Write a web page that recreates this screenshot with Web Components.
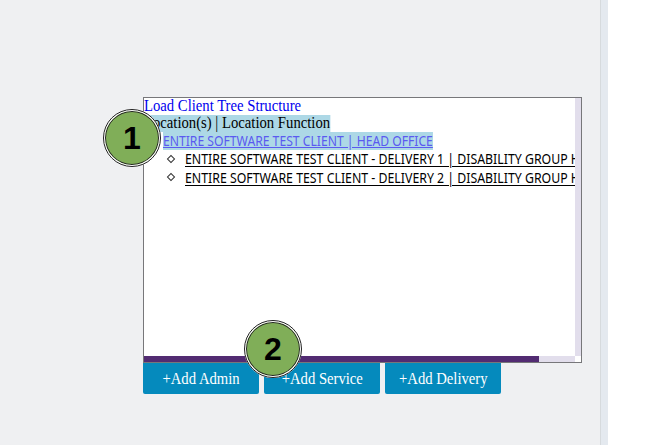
<!DOCTYPE html>
<html>
<head>
<meta charset="utf-8">
<title>Client Tree</title>
<style>
  html, body { margin:0; height:100%; background:#fff; }
  body { overflow:hidden; }
</style>
</head>
<body>
<tree-page>
  <client-tree slot="tree">
    <tree-node slot="root" href="#">ENTIRE SOFTWARE TEST CLIENT | HEAD OFFICE</tree-node>
    <tree-leaf>ENTIRE SOFTWARE TEST CLIENT - DELIVERY 1 | DISABILITY GROUP HOME</tree-leaf>
    <tree-leaf>ENTIRE SOFTWARE TEST CLIENT - DELIVERY 2 | DISABILITY GROUP HOME</tree-leaf>
  </client-tree>
  <add-button slot="actions">+Add Admin</add-button>
  <add-button slot="actions">+Add Service</add-button>
  <add-button slot="actions">+Add Delivery</add-button>
  <step-badge slot="badges" style="left:103px;top:109px">1</step-badge>
  <step-badge slot="badges" style="left:244px;top:320px">2</step-badge>
</tree-page>

<script>
  function shadow(el, html) {
    el.attachShadow({ mode: 'open' }).innerHTML = html;
  }

  // page frame: grey work area, thin side strip, white remainder
  class TreePage extends HTMLElement {
    connectedCallback() {
      shadow(this, `
        <style>
          :host { display:flex; width:670px; height:445px; position:relative; overflow:hidden; }
          .main { box-sizing:border-box; width:600px; background:#eff0f2; padding:97px 0 0 143px; }
          .strip { box-sizing:border-box; width:8px; background:#e4e9ef; border-left:1px solid #d6dadd; }
          .rest { flex:1; background:#fff; }
          .actions { display:flex; gap:5px; }
        </style>
        <div class="main">
          <slot name="tree"></slot>
          <div class="actions"><slot name="actions"></slot></div>
        </div>
        <div class="strip"></div>
        <div class="rest"></div>
        <slot name="badges"></slot>
      `);
    }
  }

  // the source text is narrower than any installed face, hence the scaleX on each line
  class ClientTree extends HTMLElement {
    connectedCallback() {
      shadow(this, `
        <style>
          :host { display:grid; grid-template-columns:1fr 6px; grid-template-rows:1fr 6px; box-sizing:border-box;
                  width:439px; height:266px; background:#fff; border:1px solid #77777a; }
          .view { overflow:hidden; min-width:0; font:16px/16px "Liberation Serif", serif; }
          .load, .head { display:block; width:max-content; height:17px; white-space:nowrap;
                         transform:scaleX(.918); transform-origin:left; }
          .load { color:#0000ee; }
          .head { background:#add8e6; color:#000; }
          ul { margin:0; padding:0; list-style:none; }
          .vbar { background:#e2deec; }
          .hbar { background:#e2deec; }
          .thumb { width:395px; height:100%; background:#522b72; }
          .corner { background:#fff; }
        </style>
        <div class="view">
          <div class="load">Load Client Tree Structure</div>
          <div class="head">Location(s) | Location Function</div>
          <slot name="root"></slot>
          <ul><slot></slot></ul>
        </div>
        <div class="vbar"></div>
        <div class="hbar"><div class="thumb"></div></div>
        <div class="corner"></div>
      `);
    }
  }

  class TreeNode extends HTMLElement {
    connectedCallback() {
      shadow(this, `
        <style>
          :host { display:block; height:18px; padding-left:19px; white-space:nowrap;
                  font:14px/17px "Noto Sans", sans-serif; }
          a { color:#5a5af0; background:#add8e6; text-decoration:underline; display:inline-block; height:18px;
              transform:scaleX(.868); transform-origin:left; }
        </style>
        <a href="${this.getAttribute('href') || '#'}"><slot></slot></a>
      `);
    }
  }

  class TreeLeaf extends HTMLElement {
    connectedCallback() {
      shadow(this, `
        <style>
          :host { display:flex; align-items:center; height:18.5px; padding-left:24px; white-space:nowrap;
                  font:14px/17px "Noto Sans", sans-serif; color:#000; margin-top:-.5px; margin-bottom:.5px; }
          .dot { width:4px; height:4px; border:1px solid #333; transform:rotate(45deg); margin-right:11px; flex:none; }
          span { text-decoration:underline; text-underline-offset:2px; transform:scaleX(.88); transform-origin:left; }
        </style>
        <div class="dot"></div><span><slot></slot></span>
      `);
    }
  }

  class AddButton extends HTMLElement {
    connectedCallback() {
      shadow(this, `
        <style>
          :host { display:flex; justify-content:center; box-sizing:border-box; width:116px; height:31px; background:#058abd; color:#fff;
                  border-radius:0 0 2px 2px; cursor:pointer;
                  font:16px/31px "Liberation Serif", serif; }
          span { display:block; transform:scaleX(.917); }
        </style>
        <span><slot></slot></span>
      `);
    }
  }

  class StepBadge extends HTMLElement {
    connectedCallback() {
      shadow(this, `
        <style>
          :host { position:absolute; display:block; box-sizing:border-box; width:58px; height:58px; border-radius:50%;
                  background:#80ae58; color:#000; text-align:center;
                  border:2px solid #fff; outline:1.5px solid #222; outline-offset:-1px;
                  box-shadow:inset 0 0 0 1px #222;
                  font:bold 32px/54px "Liberation Sans", sans-serif; }
        </style>
        <slot></slot>
      `);
    }
  }

  customElements.define('tree-page', TreePage);
  customElements.define('client-tree', ClientTree);
  customElements.define('tree-node', TreeNode);
  customElements.define('tree-leaf', TreeLeaf);
  customElements.define('add-button', AddButton);
  customElements.define('step-badge', StepBadge);
</script>
</body>
</html>
